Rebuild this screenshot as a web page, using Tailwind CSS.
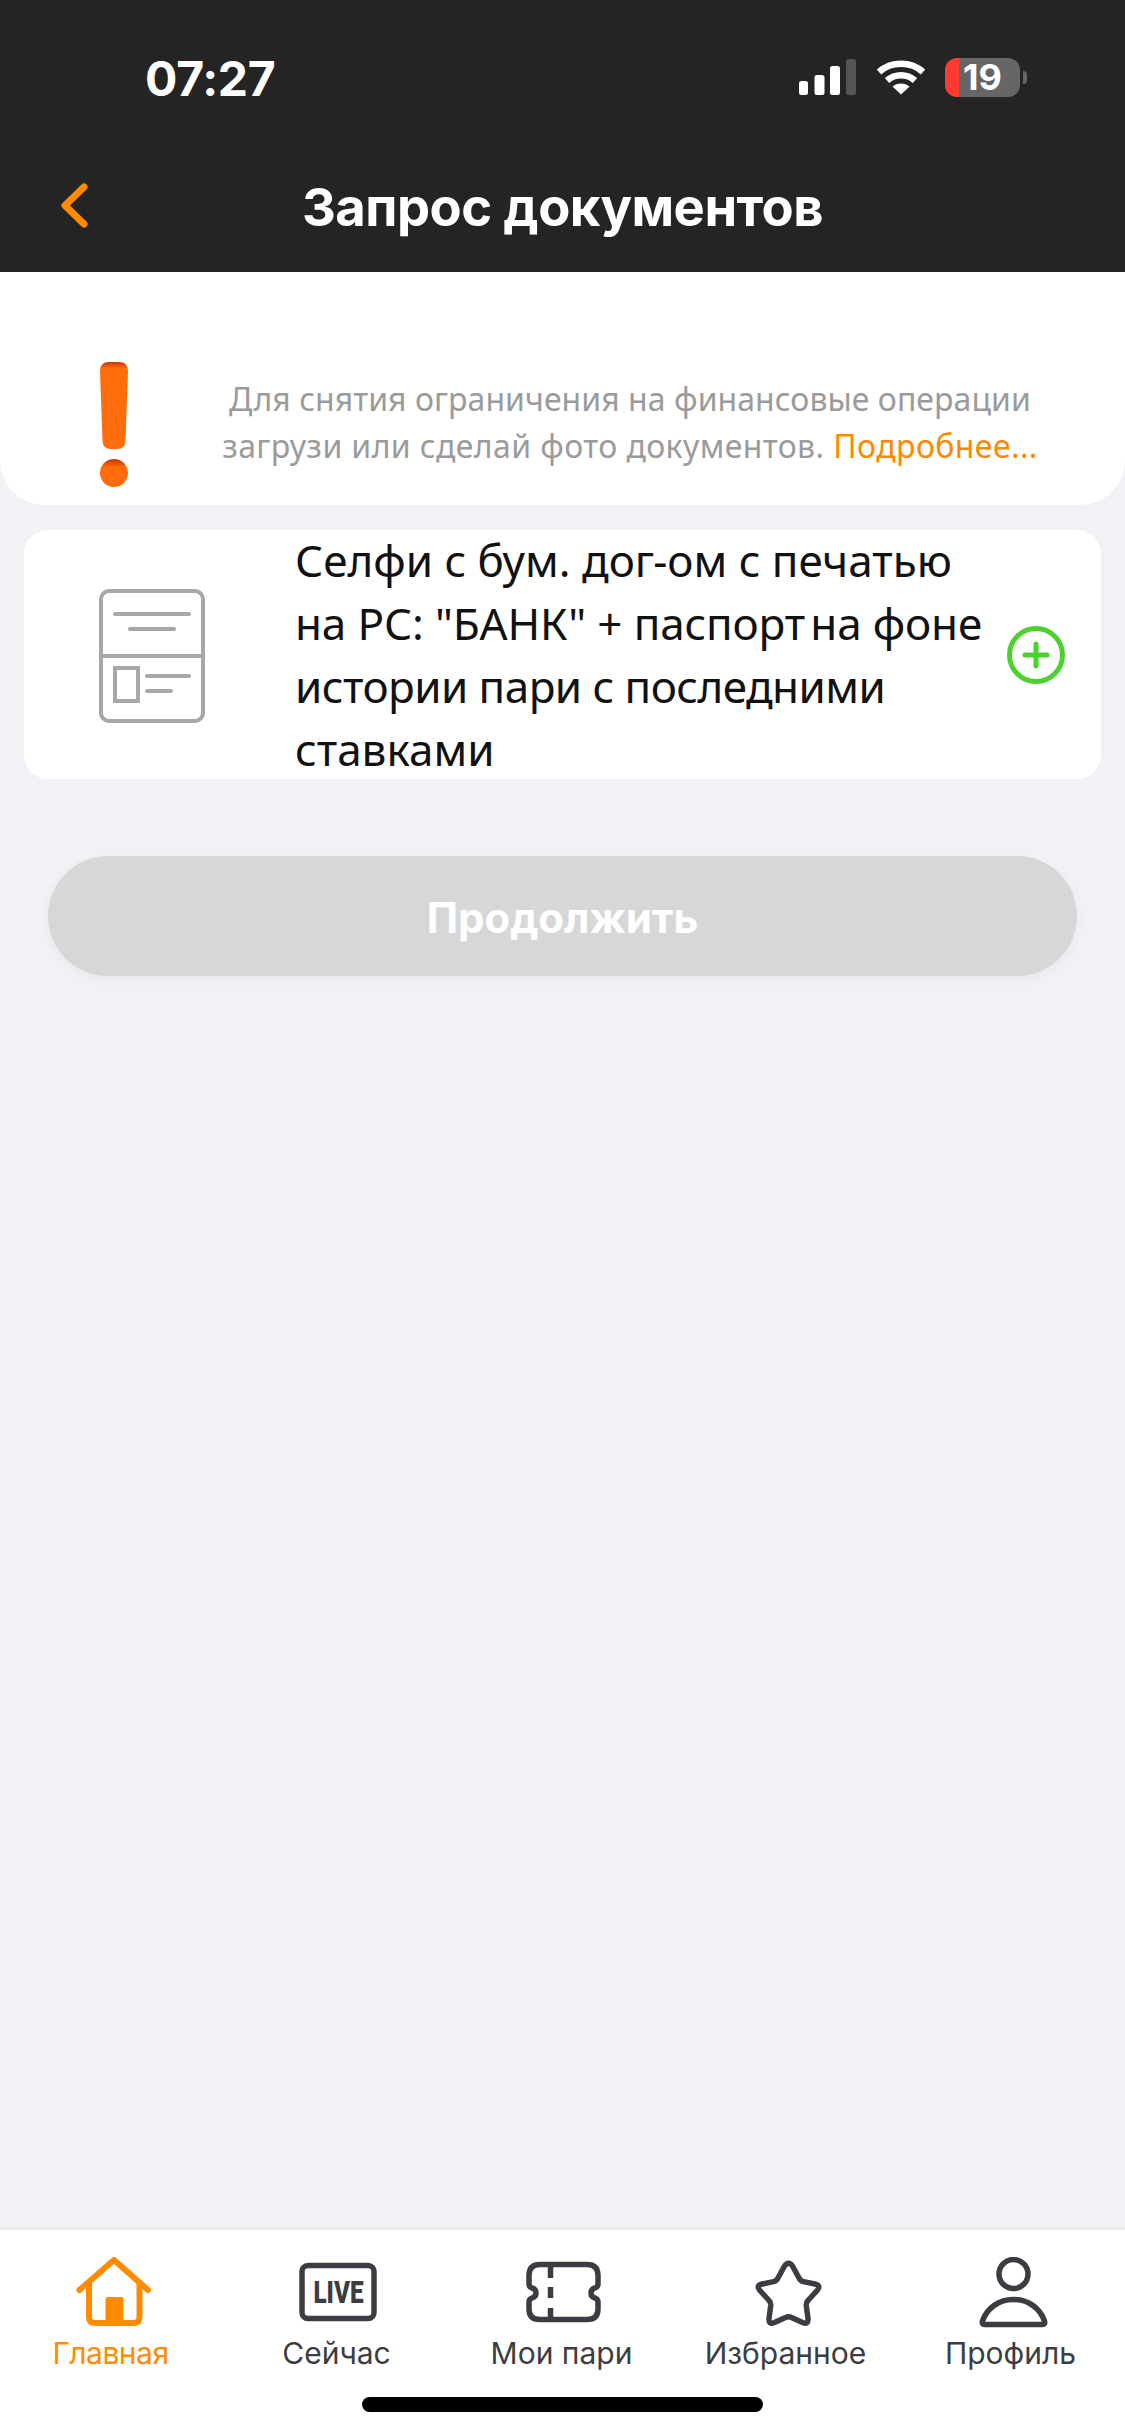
<!DOCTYPE html>
<html lang="ru">
<head>
    <meta charset="UTF-8">
    <meta name="viewport" content="width=device-width, initial-scale=1.0">
    <title>Запрос документов</title>
    <script src="https://cdn.jsdelivr.net/npm/@tailwindcss/browser@4"></script>
</head>
<body class="bg-[#f1f1f6] font-['Inter',sans-serif]">
<div class="flex flex-col h-[2436px] w-[1125px] overflow-hidden">

    <!-- dark header with status bar -->
    <header class="bg-[#242424] h-[272px] shrink-0 text-white">
        <div class="flex items-center h-[154px] pl-[145px] pr-[98px] justify-between">
            <span class="text-[48px] font-bold leading-none tracking-[-0.3px] w-[135px] mt-[3px]">07:27</span>
            <div class="flex items-center">
                <svg width="58" height="36" viewBox="0 0 58 36" fill="#fff">
                    <rect x="0" y="22" width="9" height="14" rx="2.5"/>
                    <rect x="15.5" y="16" width="10" height="20" rx="2.5"/>
                    <rect x="31" y="7" width="10" height="29" rx="2.5"/>
                    <rect x="47" y="0" width="10" height="36" rx="2.5" fill="#555"/>
                </svg>
                <svg class="ml-[19px]" width="50" height="36" viewBox="0 0 50 36" fill="none" stroke="#fff" stroke-width="6.5">
                    <path d="M3 13C15 2 35 2 47 13"/>
                    <path d="M11 21.5C19 14.5 31 14.5 39 21.5"/>
                    <path d="M25 35.5L16.5 27.5C21 23.5 29 23.5 33.5 27.5Z" fill="#fff" stroke="none"/>
                </svg>
                <div class="ml-[19px] flex items-center justify-center w-[75px] h-[39px] rounded-[12px] bg-[linear-gradient(90deg,#ff3b30_14px,#666666_14px)] text-[36px] font-bold leading-none">19</div>
                <div class="ml-[3px] w-[4px] h-[13px] rounded-r-full bg-[#666666]"></div>
            </div>
        </div>
        <div class="relative flex items-center justify-center h-[118px]">
            <svg class="absolute left-[58px] top-[26px]" width="34" height="52" viewBox="0 0 34 52" fill="none" stroke="#ff8c00" stroke-width="7" stroke-linecap="round" stroke-linejoin="round">
                <path d="M26 7L7 25.5L26 44"/>
            </svg>
            <h1 class="text-[52.5px] font-bold leading-none tracking-[-0.5px] -mt-[12px]">Запрос документов</h1>
        </div>
    </header>

    <!-- notice -->
    <section class="bg-white h-[233px] shrink-0 rounded-b-[45px] flex pl-[100px]">
        <svg class="mt-[90px]" width="28" height="125" viewBox="0 0 28 125">
            <defs>
                <linearGradient id="ex" x1="0" y1="0" x2="0" y2="1">
                    <stop offset="0" stop-color="#c93400"/>
                    <stop offset="0.07" stop-color="#ff6c0c"/>
                </linearGradient>
                <linearGradient id="dot" x1="0" y1="0" x2="0" y2="1">
                    <stop offset="0" stop-color="#c93400"/>
                    <stop offset="0.3" stop-color="#ff6c0c"/>
                </linearGradient>
            </defs>
            <path d="M0 9Q0 0 9 0H19Q28 0 28 9L25.5 79Q25 87 17 87H11Q3 87 2.5 79Z" fill="url(#ex)"/>
            <ellipse cx="14" cy="111" rx="14" ry="14" fill="url(#dot)"/>
        </svg>
        <p class="ml-[92px] mt-[103px] w-[820px] text-center font-['Noto_Sans',sans-serif] text-[32px] leading-[47px] text-[#9b9b9b]">
            <span class="tracking-[0.05px]">Для снятия ограничения на финансовые операции</span><br>
            <span class="tracking-[0.4px]">загрузи или сделай фото документов. <span class="text-[#ff8800]">Подробнее...</span></span>
        </p>
    </section>

    <!-- document row -->
    <section class="mx-[24px] mt-[25px] h-[249px] shrink-0 bg-white rounded-[24px] flex items-center">
        <svg class="ml-[75px] mt-[3px] shrink-0" width="106" height="134" viewBox="0 0 106 134" fill="none" stroke="#a8a8a8" stroke-width="4" stroke-linecap="round">
            <rect x="2" y="2" width="102" height="130" rx="8"/>
            <path d="M2 67H104" stroke-linecap="butt"/>
            <path d="M16 25H90M31 40H75M48 87H90M48 102H72"/>
            <rect x="16" y="79" width="23" height="33"/>
        </svg>
        <p class="ml-[90px] w-[700px] shrink-0 font-['Noto_Sans',sans-serif] text-[44px] leading-[63px] text-[#111111]">
            Селфи с бум. дог-ом с печатью<br>
            <span class="tracking-[-0.15px]">на РС: "БАНК" + паспорт<span class="-ml-[6px]"> на фоне</span></span><br>
            <span class="tracking-[-0.55px]">истории пари с последними</span><br>
            ставками
        </p>
        <svg class="ml-[12px] shrink-0" width="58" height="58" viewBox="0 0 58 58" fill="none" stroke="#4cd12f" stroke-width="5" stroke-linecap="round">
            <circle cx="29" cy="29" r="26.5"/>
            <path d="M29 18V40M18 29H40"/>
        </svg>
    </section>

    <!-- continue -->
    <button class="mx-[48px] mt-[77px] h-[120px] shrink-0 rounded-[60px] bg-[#d7d7d7] text-white text-[42px] font-bold pt-[2px] shadow-[0_4px_16px_rgba(0,0,0,0.04)]">Продолжить</button>

    <div class="flex-1"></div>

    <!-- tab bar -->
    <nav class="bg-white h-[209px] shrink-0 border-t-[3px] border-[#ececec] relative">
        <div class="grid grid-cols-5 pt-[27px]">
            <a class="flex flex-col items-center text-[#ff8c00]">
                <svg width="80" height="72" viewBox="0 0 80 72" fill="none" stroke="#ff8c00" stroke-width="6" stroke-linecap="round" stroke-linejoin="round">
                    <path d="M6.5 33L41 3L75 33"/>
                    <path d="M16 26V60Q16 66 22 66H60.5Q66.5 66 66.5 60V26"/>
                    <path d="M32.5 68V42Q32.5 40 34.5 40H48.5Q50.5 40 50.5 42V68Z" fill="#ff8c00" stroke="none"/>
                </svg>
                <span class="mt-[4px] -ml-[4px] text-[30px] leading-[40px] tracking-[-0.5px]">Главная</span>
            </a>
            <a class="flex flex-col items-center text-[#3c3d42]">
                <svg width="80" height="72" viewBox="0 0 80 72" fill="none" stroke="#3c3d42" stroke-width="5.5">
                    <rect x="4" y="8.5" width="72" height="53" rx="6"/>
                    <text x="15.5" y="46" textLength="50" lengthAdjust="spacingAndGlyphs" font-family="Roboto" font-weight="900" font-size="31" fill="#3c3d42" stroke="none">LIVE</text>
                </svg>
                <span class="mt-[4px] -ml-[2px] text-[30px] leading-[40px]">Сейчас</span>
            </a>
            <a class="flex flex-col items-center text-[#3c3d42]">
                <svg width="80" height="72" viewBox="0 0 80 72" fill="none" stroke="#3c3d42" stroke-width="5.5" stroke-linejoin="round">
                    <path d="M17 7.5H64Q75 7.5 75 18.5V27Q75 30 72 31Q68 32 68 36Q68 40 72 41Q75 42 75 45V52Q75 62.5 64 62.5H17Q6 62.5 6 52V45Q6 42 9 41Q13 40 13 36Q13 32 9 31Q6 30 6 27V18.5Q6 7.5 17 7.5Z"/>
                    <path d="M27.5 8V21M27.5 30V41M27.5 51V62"/>
                </svg>
                <span class="mt-[4px] -ml-[2px] text-[30px] leading-[40px]">Мои пари</span>
            </a>
            <a class="flex flex-col items-center text-[#3c3d42]">
                <svg width="80" height="72" viewBox="0 0 80 72" fill="none" stroke="#3c3d42" stroke-width="5.5" stroke-linejoin="round">
                    <path d="M36.5 9Q40.5 3.5 44.5 9L51 21Q52.5 24 55.5 24.6L67 27Q73 28.5 69.5 33L60 43.5Q58 45.5 58.3 48.5L60 61.5Q60.5 68 54.5 65.5L43.5 60.5Q40.5 59 37.5 60.5L26.5 65.5Q20.5 68 21 61.5L22.7 48.5Q23 45.5 21 43.5L11.5 33Q8 28.5 14 27L25.5 24.6Q28.5 24 30 21Z"/>
                </svg>
                <span class="mt-[4px] -ml-[4px] text-[30px] leading-[40px]">Избранное</span>
            </a>
            <a class="flex flex-col items-center text-[#3c3d42]">
                <svg width="80" height="72" viewBox="0 0 80 72" fill="none" stroke="#3c3d42" stroke-width="5.5" stroke-linejoin="round">
                    <circle cx="40.5" cy="17" r="14.5"/>
                    <path d="M11.5 67.5H69.5Q72.5 67.5 71.5 64C67 51 55 42.5 40.5 42.5C26 42.5 14 51 9.5 64Q8.5 67.5 11.5 67.5Z"/>
                </svg>
                <span class="mt-[4px] -ml-[4px] text-[30px] leading-[40px]">Профиль</span>
            </a>
        </div>
        <div class="absolute left-[362px] bottom-[24px] w-[401px] h-[15px] rounded-full bg-black"></div>
    </nav>
</div>
</body>
</html>
